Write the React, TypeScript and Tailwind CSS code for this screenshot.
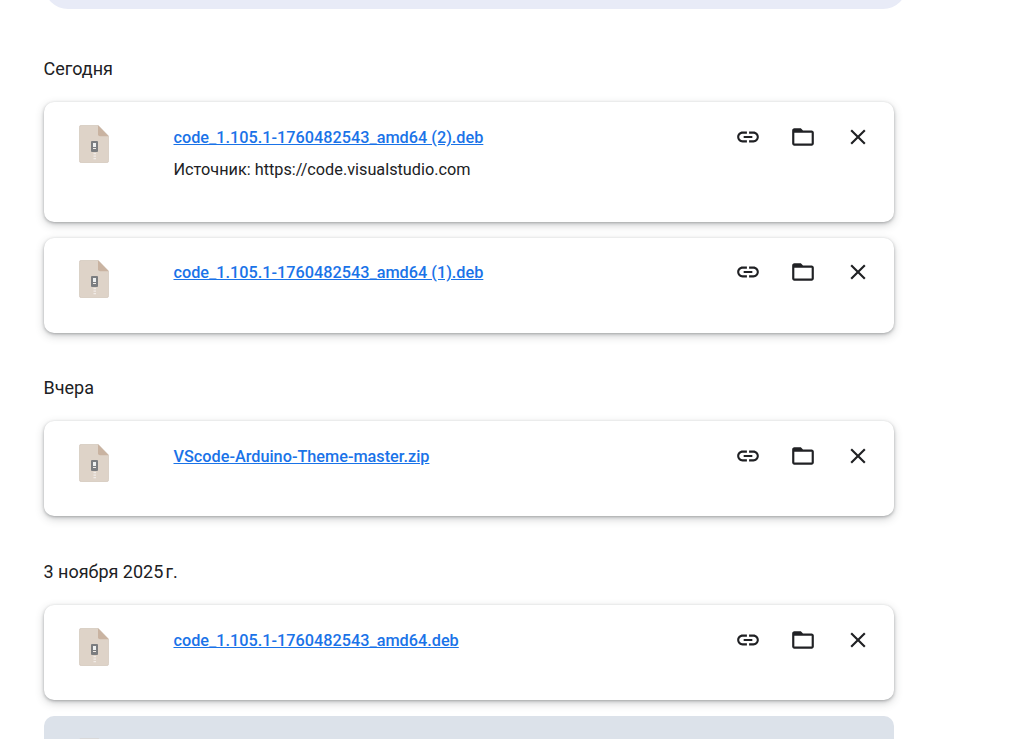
import type { ReactNode } from 'react'

interface DownloadItem {
  name: string
  source?: string
  tight?: boolean
}

function FileIcon () {
  return (
    <svg width="30" height="38" viewBox="0 0 30 38">
      <path d="M2.5 0.3h16.5l10.7 11v24.2a2.2 2.2 0 0 1-2.2 2.2h-25a2.2 2.2 0 0 1-2.2-2.2v-33a2.2 2.2 0 0 1 2.2-2.2z" fill="#ded3c8" stroke="#cdc1b5" strokeWidth="0.6" />
      <path d="M19 0.3l10.7 11h-8.7a2 2 0 0 1-2-2z" fill="#c9b3a1" />
      <rect x="12" y="16" width="7" height="11" rx="1" fill="#7b7d80" />
      <rect x="14" y="18" width="3" height="4" fill="#eef0f0" />
      <path d="M14 23h3v1h-3zM14.5 28h2.5v1.2h-2.5zM14.5 30.5h2.5v1.2h-2.5zM14.5 33h2.5v1.2h-2.5z" fill="#f1ece7" />
    </svg>
  )
}

function ActionIcon ({ d }: { d: string }) {
  return (
    <button className="flex items-center justify-center w-[55px] h-[26px]">
      <svg width="26" height="26" viewBox="0 0 24 24" fill="#202124"><path d={d} fillRule="evenodd" /></svg>
    </button>
  )
}

const linkPath = 'M3.9 12c0-1.71 1.39-3.1 3.1-3.1h4V7H7c-2.76 0-5 2.24-5 5s2.24 5 5 5h4v-1.9H7c-1.71 0-3.1-1.39-3.1-3.1zM8 13h8v-2H8v2zm9-6h-4v1.9h4c1.71 0 3.1 1.39 3.1 3.1s-1.39 3.1-3.1 3.1h-4V17h4c2.76 0 5-2.24 5-5s-2.24-5-5-5z'
const folderPath = 'M2 6c0-1.1.9-2 2-2h6l2 2h8c1.1 0 2 .9 2 2v10c0 1.1-.9 2-2 2H4c-1.1 0-2-.9-2-2zM4 8v10h16V8z'
const closePath = 'M19 6.41L17.59 5 12 10.59 6.41 5 5 6.41 10.59 12 5 17.59 6.41 19 12 13.41 17.59 19 19 17.59 13.41 12z'

function Card ({ name, source, tight }: DownloadItem) {
  return (
    <div className={`flex w-[850px] bg-white rounded-[10px] shadow-[0_1px_3px_rgba(60,64,67,0.35),0_3px_8px_rgba(60,64,67,0.25)] ${tight ? 'pt-[22px]' : 'pt-[23px]'} ${source ? 'h-[120px]' : 'h-[95px]'}`}>
      <div className="w-[129.5px] pl-[35px] shrink-0"><FileIcon /></div>
      <div className="flex-1 min-w-0">
        <a className="block text-[#1a73e8] font-medium underline leading-[24px] text-[16.25px] mt-[1px]" href="#">{name}</a>
        {source && <p className="text-[#202124] text-[16.25px] leading-[24px] mt-[8px]">Источник: {source}</p>}
      </div>
      <div className="flex shrink-0 mr-[8.5px] -mt-[1px]">
        <ActionIcon d={linkPath} />
        <ActionIcon d={folderPath} />
        <ActionIcon d={closePath} />
      </div>
    </div>
  )
}

function DayLabel ({ children, className }: { children: ReactNode, className: string }) {
  return <h2 className={`text-[#202124] text-[18px] leading-[24px] -ml-[0.5px] ${className}`}>{children}</h2>
}

export default function App () {
  return (
    <div className="h-[739px] overflow-hidden bg-white pl-[44px] font-['Roboto',sans-serif]">
      <div className="w-[863px] h-[48px] -mt-[39px] bg-[#e8ebf7] rounded-[24px]"></div>
      <DayLabel className="mt-[48px] mb-[21px]">Сегодня</DayLabel>
      <div className="flex flex-col gap-[16px]">
        <Card name="code_1.105.1-1760482543_amd64 (2).deb" source="https://code.visualstudio.com" />
        <Card name="code_1.105.1-1760482543_amd64 (1).deb" tight />
      </div>
      <DayLabel className="mt-[43px] mb-[21px]">Вчера</DayLabel>
      <Card name="VScode-Arduino-Theme-master.zip" />
      <DayLabel className="mt-[44px] mb-[21px]">3 ноября 2025&#x202F;г.</DayLabel>
      <div className="flex flex-col gap-[16px]">
        <Card name="code_1.105.1-1760482543_amd64.deb" />
        <div className="w-[850px] h-[60px] bg-[#dce2ea] rounded-[10px] shrink-0 pt-[22px] pl-[35px]">
          <div className="opacity-40"><FileIcon /></div>
        </div>
      </div>
    </div>
  )
}
